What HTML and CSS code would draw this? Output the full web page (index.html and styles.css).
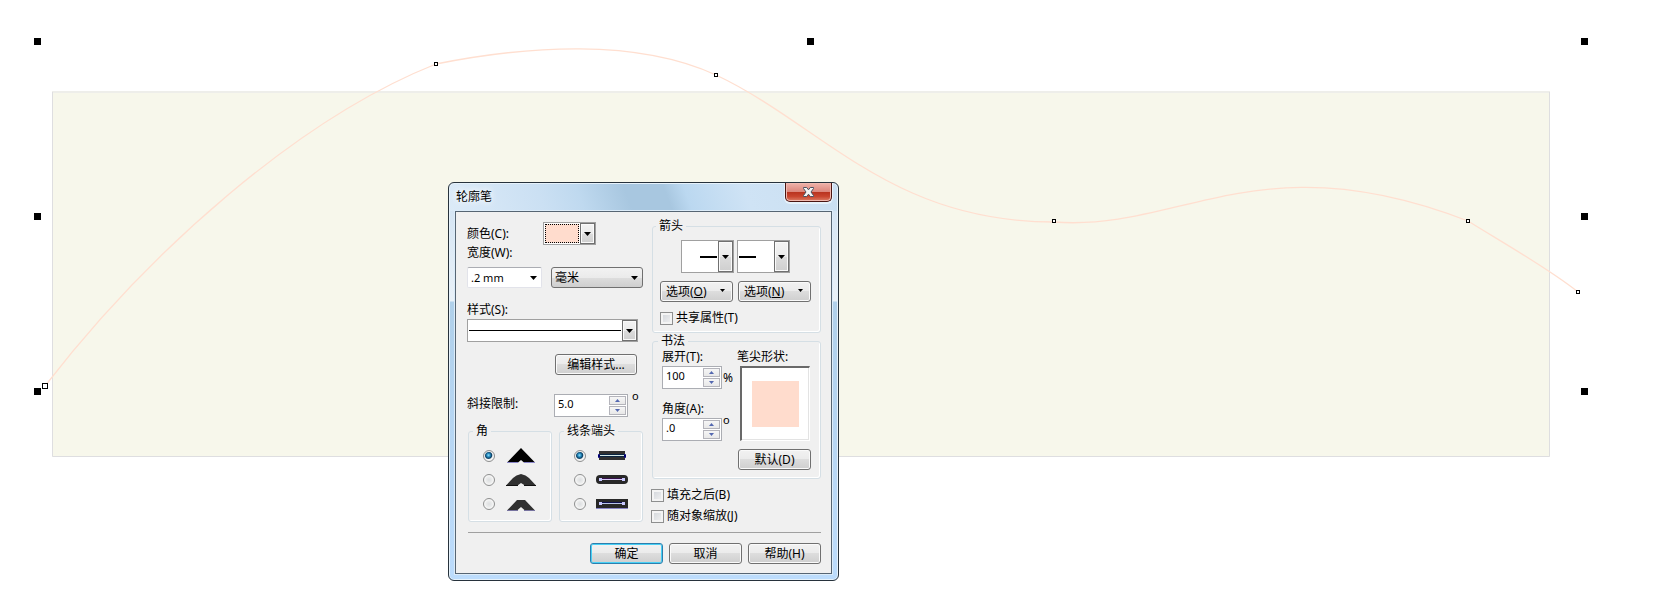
FILE: index.html
```html
<!DOCTYPE html>
<html lang="zh-CN">
<head>
<meta charset="utf-8">
<title>轮廓笔</title>
<link rel="stylesheet" href="styles.css">
</head>
<body>
<main class="workspace">
  <svg class="drawing" viewBox="0 0 1661 616" aria-hidden="true">
    <rect x="52" y="91" width="1498" height="366" fill="#f7f7eb"/>
    <path d="M52 92H1550" stroke="#eeeeea" stroke-width="2"/>
    <path d="M52.500 92V456.500H1549.500V92" fill="none" stroke="#dedee0"/>
    <path d="M45 386C150 250 300 118 436 64C526 46 636 38 716 75C822 125 890 222 1054 222C1180 232 1260 140 1468 221C1500 241 1548 268 1578 292" fill="none" stroke="#ffdfd0" stroke-width="1.300"/>
    <g fill="#000">
      <rect x="34" y="38" width="7" height="7"/><rect x="807" y="38" width="7" height="7"/><rect x="1581" y="38" width="7" height="7"/>
      <rect x="34" y="213" width="7" height="7"/><rect x="1581" y="213" width="7" height="7"/>
      <rect x="34" y="388" width="7" height="7"/><rect x="1581" y="388" width="7" height="7"/>
    </g>
    <g fill="#fff" stroke="#000">
      <rect x="42.500" y="383.500" width="5" height="5"/>
      <rect x="434.500" y="62.500" width="3" height="3"/><rect x="714.500" y="73.500" width="3" height="3"/>
      <rect x="1052.500" y="219.500" width="3" height="3"/><rect x="1466.500" y="219.500" width="3" height="3"/>
      <rect x="1576.500" y="290.500" width="3" height="3"/>
    </g>
  </svg>

  <form class="dialog" role="dialog" aria-labelledby="dialog-title">
    <header class="titlebar">
      <h1 class="title" id="dialog-title">轮廓笔</h1>
      <button class="close" type="button" aria-label="关闭">
        <svg width="13" height="12" viewBox="0 0 13 12"><path d="M1.500 1.500h3.200L6.500 3.800 8.300 1.500h3.200v1L9 6l2.500 3.500v1H8.300L6.500 8.200 4.700 10.500H1.500v-1L4 6 1.500 2.500z" fill="#f4f4f4" stroke="#4b5362"/></svg>
      </button>
    </header>

    <div class="client">
      <div class="columns">
        <div class="column-left">
          <div class="color-row">
            <label for="color">颜色(C):</label>
            <button class="picker color-picker" id="color" type="button">
              <span class="color-chip"></span>
              <span class="drop"><svg width="7" height="4" viewBox="0 0 7 4"><path d="M0 0h7L3.500 4z"/></svg></span>
            </button>
          </div>
          <label class="line-label" for="width">宽度(W):</label>
          <div class="width-row">
            <div class="combo">
              <input id="width" type="text" value=".2 mm">
              <button class="combo-drop" type="button" aria-label="宽度列表"><svg width="7" height="4" viewBox="0 0 7 4"><path d="M0 0h7L3.500 4z"/></svg></button>
            </div>
            <div class="select-wrap">
              <select aria-label="单位"><option>毫米</option></select>
              <svg width="7" height="4" viewBox="0 0 7 4"><path d="M0 0h7L3.500 4z"/></svg>
            </div>
          </div>
          <label class="line-label style-label" for="style">样式(S):</label>
          <button class="picker style-picker" id="style" type="button">
            <span class="stroke-sample"></span>
            <span class="drop"><svg width="7" height="4" viewBox="0 0 7 4"><path d="M0 0h7L3.500 4z"/></svg></span>
          </button>
          <button class="btn edit-style" type="button">编辑样式...</button>
          <div class="miter-row">
            <label for="miter">斜接限制:</label>
            <div class="spin">
              <input id="miter" type="text" value="5.0">
              <div class="steps">
                <button type="button" aria-label="增加"><svg width="5" height="3" viewBox="0 0 5 3"><path d="M0 3L2.500 0 5 3z"/></svg></button>
                <button type="button" aria-label="减少"><svg width="5" height="3" viewBox="0 0 5 3"><path d="M0 0L2.500 3 5 0z"/></svg></button>
              </div>
            </div>
            <span class="degree">o</span>
          </div>
          <div class="groups">
            <fieldset class="radio-group">
              <legend>角</legend>
              <label class="radio-row"><input type="radio" name="corner" checked aria-label="尖角">
                <svg width="32" height="18" viewBox="0 0 32 18"><path d="M2 15.500L16 1l14 14.500H19L16 13l-3 2.500z" fill="#000"/><path d="M2 15.500h11M19 15.500h11" stroke="#8a86c8"/></svg></label>
              <label class="radio-row"><input type="radio" name="corner" aria-label="圆角">
                <svg width="32" height="18" viewBox="0 0 32 18"><path d="M1 14.500L8 7Q11 4 16 3Q21 4 24 7l7 7.500H20L16 12l-3.500 2.500z" fill="#303030"/><path d="M1 14.500h12M19 14.500h12" stroke="#111"/></svg></label>
              <label class="radio-row"><input type="radio" name="corner" aria-label="斜角">
                <svg width="32" height="18" viewBox="0 0 32 18"><path d="M2 15.500L12 5h8l10 10.500H20L16 12l-4 3.500z" fill="#303030"/><path d="M2 15.500h11M19 15.500h11" stroke="#77739f"/></svg></label>
            </fieldset>
            <fieldset class="radio-group">
              <legend>线条端头</legend>
              <label class="radio-row"><input type="radio" name="cap" checked aria-label="方形端头">
                <svg width="32" height="18" viewBox="0 0 32 18"><path d="M3 4h26v9H3z" fill="#303030"/><path d="M4 8.500h24" stroke="#0a2440" stroke-width="3"/><path d="M4 8.500h24" stroke="#d4e8e6"/><path d="M2.500 7.500h1v3h-1zM28.500 7.500h1v3h-1z" fill="#cfcfff" stroke="#000070"/></svg></label>
              <label class="radio-row"><input type="radio" name="cap" aria-label="圆形端头">
                <svg width="32" height="18" viewBox="0 0 32 18"><rect y="4" width="32" height="9" rx="4" fill="#282828"/><path d="M4 7.500h24" stroke="#35104a"/><path d="M5 8.500h22" stroke="#d9cdf8"/><path d="M3 7h3v3H3zM26 7h3v3h-3z" fill="#c8c8ff"/></svg></label>
              <label class="radio-row"><input type="radio" name="cap" aria-label="延伸端头">
                <svg width="32" height="18" viewBox="0 0 32 18"><path d="M0 4h32v9H0z" fill="#282828"/><path d="M0 13.500h32" stroke="#8a86c8"/><path d="M4 7.500h24" stroke="#101050"/><path d="M5 8.500h22" stroke="#b9c5e8"/><path d="M3 7h3v3H3zM26 7h3v3h-3z" fill="#c8c8ff"/></svg></label>
            </fieldset>
          </div>
        </div>

        <div class="column-right">
          <fieldset class="arrows">
            <legend>箭头</legend>
            <div class="arrow-pickers">
              <button class="picker arrow-picker" type="button" aria-label="起始箭头"><span class="arrow-sample at-end"></span><span class="drop"><svg width="7" height="4" viewBox="0 0 7 4"><path d="M0 0h7L3.500 4z"/></svg></span></button>
              <button class="picker arrow-picker" type="button" aria-label="终止箭头"><span class="arrow-sample"></span><span class="drop"><svg width="7" height="4" viewBox="0 0 7 4"><path d="M0 0h7L3.500 4z"/></svg></span></button>
            </div>
            <div class="arrow-options">
              <button class="btn menu-btn" type="button"><span>选项(<u>O</u>)</span><svg width="5" height="3" viewBox="0 0 5 3"><path d="M0 0h5L2.500 3z"/></svg></button>
              <button class="btn menu-btn" type="button"><span>选项(<u>N</u>)</span><svg width="5" height="3" viewBox="0 0 5 3"><path d="M0 0h5L2.500 3z"/></svg></button>
            </div>
            <label class="check-row"><input type="checkbox">共享属性(T)</label>
          </fieldset>

          <fieldset class="calligraphy">
            <legend>书法</legend>
            <div class="calligraphy-grid">
              <div class="nib-values">
                <label class="line-label" for="stretch">展开(T):</label>
                <div class="spin-row">
                  <div class="spin">
                    <input id="stretch" type="text" value="100">
                    <div class="steps">
                      <button type="button" aria-label="增加"><svg width="5" height="3" viewBox="0 0 5 3"><path d="M0 3L2.500 0 5 3z"/></svg></button>
                      <button type="button" aria-label="减少"><svg width="5" height="3" viewBox="0 0 5 3"><path d="M0 0L2.500 3 5 0z"/></svg></button>
                    </div>
                  </div>
                  <span class="percent">%</span>
                </div>
                <label class="line-label angle-label" for="angle">角度(A):</label>
                <div class="spin-row">
                  <div class="spin">
                    <input id="angle" type="text" value=".0">
                    <div class="steps">
                      <button type="button" aria-label="增加"><svg width="5" height="3" viewBox="0 0 5 3"><path d="M0 3L2.500 0 5 3z"/></svg></button>
                      <button type="button" aria-label="减少"><svg width="5" height="3" viewBox="0 0 5 3"><path d="M0 0L2.500 3 5 0z"/></svg></button>
                    </div>
                  </div>
                  <span class="degree">o</span>
                </div>
              </div>
              <div class="nib-shape">
                <span class="line-label">笔尖形状:</span>
                <div class="nib-preview"><span class="nib"></span></div>
                <button class="btn" type="button">默认(D)</button>
              </div>
            </div>
          </fieldset>

          <div class="checks">
            <label class="check-row"><input type="checkbox">填充之后(B)</label>
            <label class="check-row"><input type="checkbox">随对象缩放(J)</label>
          </div>
        </div>
      </div>

      <footer class="actions">
        <button class="btn default" type="button">确定</button>
        <button class="btn" type="button">取消</button>
        <button class="btn" type="button">帮助(H)</button>
      </footer>
    </div>
  </form>
</main>
</body>
</html>
```
FILE: styles.css
```css
* {
  box-sizing: border-box;
}

body {
  margin: 0;
  background: #fff;
}

body,
button,
input,
select {
  font-family: "Noto Sans", "Noto Sans CJK SC", sans-serif;
  font-size: 12px;
  line-height: 16px;
  color: #000;
}

button {
  padding: 0;
}

.workspace {
  position: relative;
}

.drawing {
  display: block;
  width: 100%;
}

/* Window frame */
.dialog {
  position: absolute;
  left: 448px;
  top: 182px;
  width: 391px;
  padding: 0 6px 6px;
  border: 1px solid #27323c;
  border-radius: 6px;
  background:
    linear-gradient(70deg, #dcebf8 0, #cbe0f3 24%, #bfd9ef 34%, #a8c7e0 46%, #a8c7e0 56%, #bbd8f0 61%, #cfe3f5 76%, #cadff1 100%) 0 0 / 100% 28px no-repeat,
    linear-gradient(180deg, #cfe1f2 0, #e9f1f8 118px, #b0d0ea 119px, #b9d8f6 300px, #bcdcfc 100%);
  box-shadow: inset 0 0 0 1px #e6f2fb;
}

.titlebar {
  display: flex;
  justify-content: space-between;
  align-items: flex-start;
  height: 28px;
}

.title {
  margin: 0;
  padding: 6px 1px;
  font-size: 12px;
  font-weight: 400;
  line-height: 16px;
  text-shadow: 0 0 6px #fff, 0 0 8px #fff;
}

.close {
  display: flex;
  justify-content: center;
  align-items: center;
  width: 47px;
  height: 19px;
  border: 1px solid #4a1512;
  border-top: 0;
  border-radius: 0 0 5px 5px;
  background: linear-gradient(180deg, #efb3ab 0, #dc877c 48%, #b8321e 50%, #c9452f 75%, #dc7e66 100%);
  box-shadow: inset 0 0 0 1px #f0b9af, 0 1px 0 1px #e6f2fb;
}

.client {
  border: 1px solid #566573;
  background: #f0f0f0;
  box-shadow: 0 0 0 1px #dcecf9;
}

.columns {
  display: grid;
  grid-template-columns: 176px 1fr;
  gap: 9px;
  padding: 6px 10px 9px 11px;
}

.column-left {
  display: flex;
  flex-direction: column;
  padding-top: 4px;
}

.line-label {
  display: block;
  height: 16px;
  white-space: nowrap;
}

/* Pickers and drop-downs */
.picker {
  display: flex;
  border: 1px solid #a0a0a0;
  background: #fff;
}

.drop {
  display: flex;
  flex: none;
  justify-content: center;
  align-items: center;
  width: 15px;
  border: 1px solid #707070;
  background: linear-gradient(180deg, #f3f3f3 0, #ebebeb 50%, #dcdcdc 52%, #cfcfcf 100%);
  box-shadow: inset 0 0 0 1px #fafafa;
}

.color-row {
  display: flex;
  align-items: center;
  height: 23px;
}

.color-row label {
  width: 76px;
}

.color-picker {
  width: 53px;
  height: 23px;
}

.color-chip {
  flex: 1;
  margin: 1px;
  border: 1px dotted #000;
  background: #ffdccd;
}

.width-row {
  display: grid;
  grid-template-columns: 75px 92px;
  gap: 9px;
  margin-top: 6px;
}

.combo {
  display: flex;
  height: 21px;
  border: 1px solid #e2e3ea;
  border-top-color: #abadb3;
  border-radius: 2px;
  background: #fff;
}

.combo input {
  width: 57px;
  padding: 0 3px;
  border: 0;
  font-size: 11px;
  background: none;
}

.combo-drop {
  display: flex;
  flex: 1;
  justify-content: center;
  align-items: center;
  border: 0;
  background: none;
}

.select-wrap {
  display: grid;
  align-items: center;
}

.select-wrap select,
.select-wrap svg {
  grid-area: 1 / 1;
}

.select-wrap svg {
  justify-self: end;
  margin-right: 5px;
  pointer-events: none;
}

.select-wrap select {
  appearance: none;
  height: 21px;
  padding: 0 3px;
  border: 1px solid #707070;
  border-radius: 3px;
  background: linear-gradient(180deg, #f2f2f2 0, #ebebeb 50%, #dddddd 52%, #cfcfcf 100%);
}

.style-label {
  margin-top: 14px;
}

.style-picker {
  align-items: stretch;
  width: 171px;
  height: 23px;
  margin-top: 1px;
}

.stroke-sample {
  flex: 1;
  align-self: center;
  height: 1px;
  margin: 0 1px;
  background: #000;
}

/* Push buttons */
.btn {
  height: 21px;
  border: 1px solid #707070;
  border-radius: 3px;
  background: linear-gradient(180deg, #f2f2f2 0, #ebebeb 48%, #dddddd 50%, #cfcfcf 100%);
  box-shadow: inset 0 0 0 1px #fafafa;
  white-space: nowrap;
}

.btn.default {
  border-color: #2c7fae;
  box-shadow: inset 0 0 0 1px #48d0f5;
}

.edit-style {
  width: 82px;
  margin: 12px 0 0 88px;
}

/* Number fields */
.spin {
  display: flex;
  width: 60px;
  height: 23px;
  padding: 1px;
  border: 1px solid #abadb3;
  background: #fff;
}

.spin input {
  flex: 1;
  min-width: 0;
  height: 16px;
  padding: 0 2px;
  border: 0;
  font-size: 11px;
  background: none;
}

.steps {
  display: grid;
  grid-template-rows: 1fr 1fr;
  gap: 1px;
  width: 17px;
}

.steps button {
  display: flex;
  justify-content: center;
  align-items: center;
  border: 1px solid #b4b4bb;
  background: linear-gradient(180deg, #f6f6f6, #e8e8e8);
}

.steps path {
  fill: #5468b0;
}

.degree {
  margin-left: 2px;
  font-size: 11px;
  line-height: 4px;
}

.miter-row {
  display: flex;
  margin-top: 19px;
}

.miter-row label {
  width: 87px;
  line-height: 20px;
}

.miter-row .spin {
  width: 74px;
}

.miter-row .degree {
  margin-left: 4px;
}

/* Group boxes */
fieldset {
  min-width: 0;
  margin: 0;
  padding: 0;
  border: 1px solid #d5dfe5;
  border-radius: 3px;
  box-shadow: inset -1px -1px 0 #fff;
}

legend {
  height: 16px;
  margin-left: -4px;
  padding: 0 3px;
}

.groups {
  display: grid;
  grid-template-columns: 1fr 1fr;
  gap: 7px;
  margin-top: 6px;
  padding-left: 1px;
}

.radio-group {
  padding: 5px 0 5px 14px;
}

.radio-group legend {
  margin-left: -10px;
}

.radio-row {
  display: flex;
  align-items: center;
  gap: 10px;
  height: 24px;
}

.radio-row svg {
  flex: none;
}

input[type="radio"] {
  appearance: none;
  flex: none;
  width: 12px;
  height: 12px;
  margin: 0;
  border: 1px solid #8e8f8f;
  border-radius: 50%;
  background: radial-gradient(circle, #dcdee0 0, #eceded 45%, #fafafa 70%);
  box-shadow: inset 0 0 0 1px #f4f4f4;
}

input[type="radio"]:checked {
  background: radial-gradient(circle at 45% 42%, #8fe0fb 0, #2589bd 22%, #0b3f63 40%, #f4f4f4 54%);
}

input[type="checkbox"] {
  appearance: none;
  flex: none;
  width: 13px;
  height: 13px;
  margin: 0;
  border: 1px solid #8e8f8f;
  background: linear-gradient(135deg, #cfd3d8, #f4f4f4);
  box-shadow: inset 0 0 0 2px #f4f4f4;
}

.check-row {
  display: flex;
  align-items: center;
  gap: 3px;
  height: 14px;
  white-space: nowrap;
}

.arrows {
  padding: 6px 0 7px 7px;
}

.arrow-pickers {
  display: flex;
  gap: 3px;
  padding-left: 21px;
}

.arrow-picker {
  width: 53px;
  height: 33px;
}

.arrow-sample {
  width: 17px;
  height: 2px;
  margin: auto auto auto 1px;
  background: #000;
}

.arrow-sample.at-end {
  margin: auto 1px auto auto;
}

.arrow-options {
  display: grid;
  grid-template-columns: 73px 73px;
  gap: 5px;
  margin: 8px 0 9px;
}

.menu-btn {
  display: flex;
  justify-content: space-between;
  align-items: center;
  padding: 0 7px 0 5px;
}

.menu-btn svg {
  margin-bottom: 3px;
}

.calligraphy {
  padding: 0 0 8px 9px;
}

.calligraphy-grid {
  display: grid;
  grid-template-columns: 75px 74px;
}

.spin-row {
  display: flex;
  margin-top: 1px;
}

.percent {
  margin-left: 1px;
  line-height: 23px;
}

.spin-row .degree {
  margin-left: 1px;
}

.angle-label {
  margin-top: 12px;
}

.nib-shape {
  display: flex;
  flex-direction: column;
}

.nib-preview {
  display: grid;
  place-items: center;
  width: 70px;
  height: 75px;
  margin: 1px 0 8px 3px;
  border: 1px solid #fff;
  border-top: 2px solid #696969;
  border-left: 2px solid #696969;
  background: #fff;
  box-shadow: inset -1px -1px 0 #e3e3e3;
}

.nib {
  width: 47px;
  height: 46px;
  background: #ffdccd;
}

.nib-shape .btn {
  margin-left: 1px;
}

.checks {
  display: grid;
  gap: 7px;
  margin: 9px 0 0 -1px;
}

.actions {
  display: flex;
  justify-content: flex-end;
  gap: 6px;
  margin: 0 10px 9px 12px;
  padding-top: 10px;
  border-top: 1px solid #a0a0a0;
}

.actions .btn {
  width: 73px;
}
```
